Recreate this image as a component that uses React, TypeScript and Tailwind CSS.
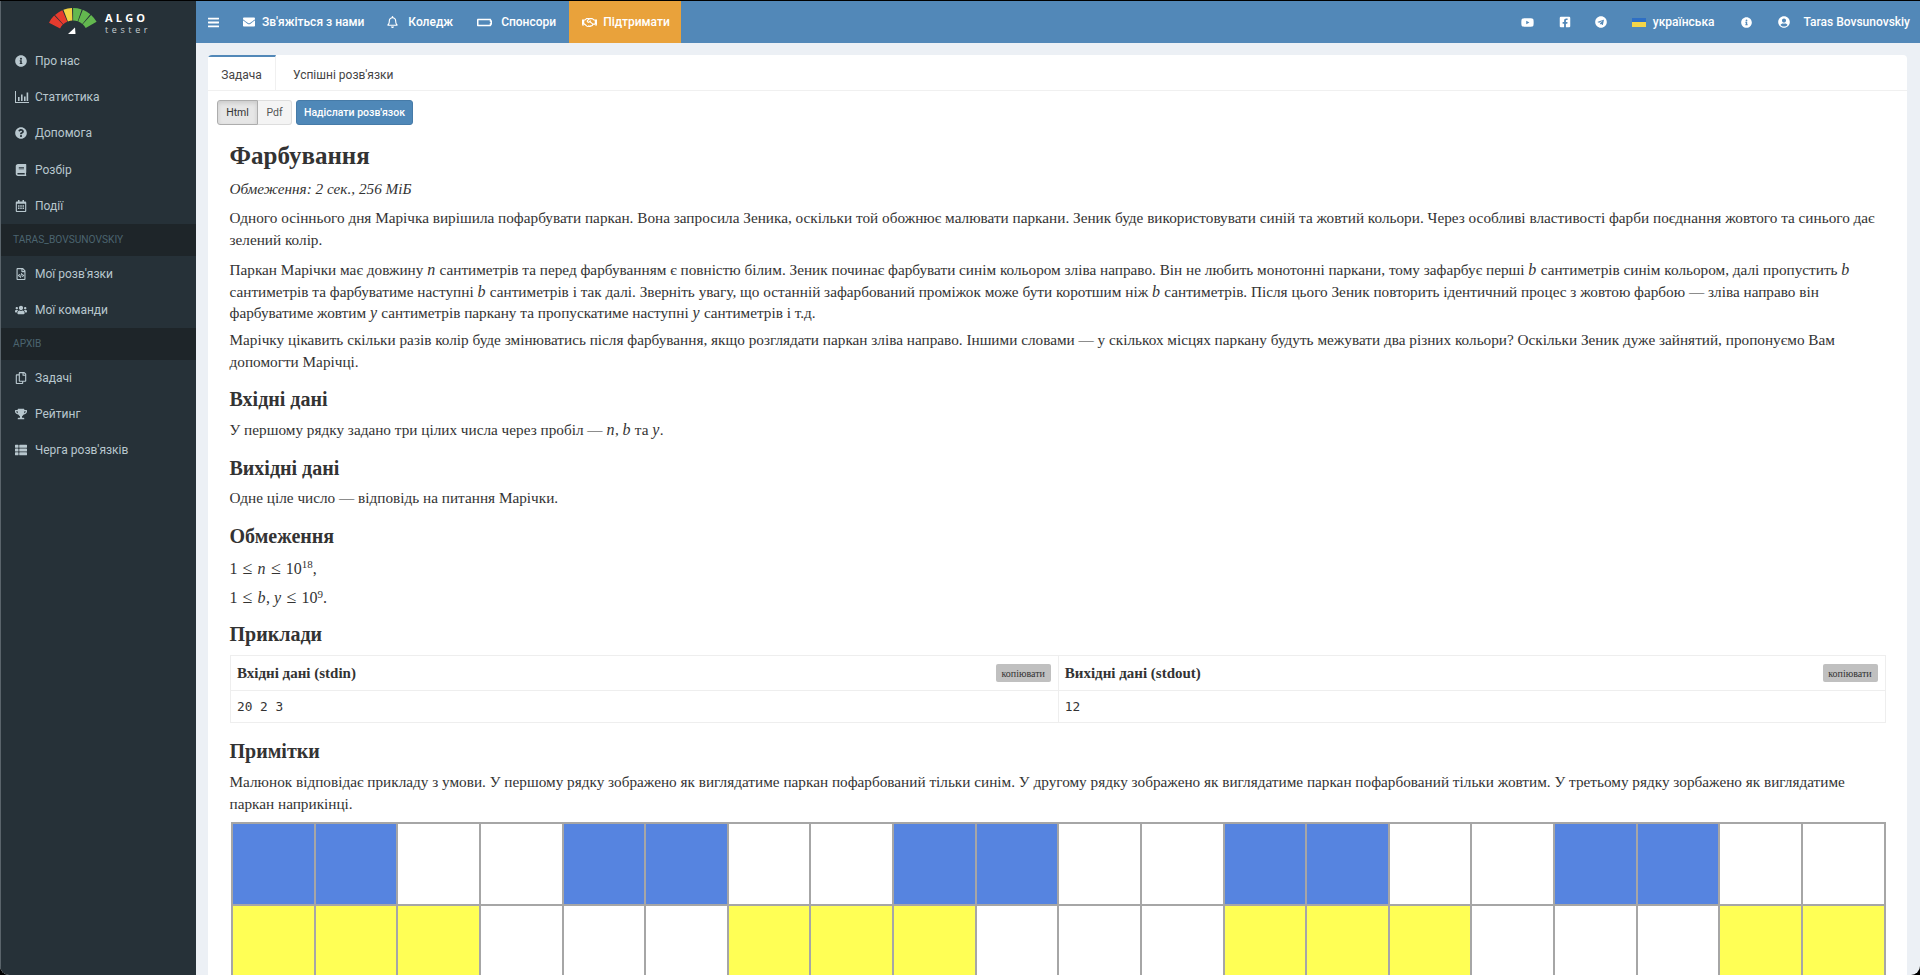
import type { ReactNode } from "react";
import {
  FaBars,
  FaBatteryEmpty,
  FaBook,
  FaEnvelope,
  FaFacebookSquare,
  FaInfoCircle,
  FaQuestionCircle,
  FaRegBell,
  FaRegCalendarAlt,
  FaRegCopy,
  FaRegFileCode,
  FaRegHandshake,
  FaTelegram,
  FaThList,
  FaTrophy,
  FaUserCircle,
  FaUsers,
  FaYoutube,
} from "react-icons/fa";

function arc(a0: number, a1: number) {
  const cx = 42;
  const cy = 34;
  const pt = (r: number, a: number) => {
    const t = (a * Math.PI) / 180;
    return `${(cx + r * Math.sin(t)).toFixed(1)} ${(cy - r * Math.cos(t)).toFixed(1)}`;
  };
  return `M${pt(14.5, a0)}L${pt(27, a0)}A27 27 0 0 1 ${pt(27, a1)}L${pt(14.5, a1)}A14.5 14.5 0 0 0 ${pt(14.5, a0)}Z`;
}

const gauge = [
  { a: -64, c: "#e63b2e" },
  { a: -43, c: "#e63b2e" },
  { a: -22, c: "#f3d344" },
  { a: -1, c: "#63b84f" },
  { a: 20, c: "#63b84f" },
  { a: 41, c: "#63b84f" },
];

function Logo() {
  return (
    <div className="h-[42px] flex items-center pl-[30px]">
      <svg width="84" height="42" viewBox="0 0 84 42" className="shrink-0">
        {gauge.map((s) => (
          <path key={s.a} d={arc(s.a + 1.2, s.a + 19.8)} fill={s.c} />
        ))}
        <path d="M37 33 L44 26.5 L44.5 33 Z" fill="#fff" />
      </svg>
      <div className="-ml-[10px] mt-[2px] font-['Open_Sans',sans-serif] text-white leading-none">
        <div className="text-[11px] font-bold tracking-[3.2px]">ALGO</div>
        <div className="text-[9px] tracking-[3.6px] text-[#c5ccd0] mt-[2px]">tester</div>
      </div>
    </div>
  );
}

function StatsIcon() {
  return (
    <svg width="14" height="12" viewBox="0 0 14 12" fill="currentColor">
      <path d="M0 0h1v11h13v1H0z" />
      <path d="M3 6h1.6v4H3zM6 3.5h1.6V10H6zM9 5.5h1.6V10H9zM11.6 1.5h1.6V10h-1.6z" />
    </svg>
  );
}

function SideItem({ icon, label }: { icon: ReactNode; label: string }) {
  return (
    <div className="h-[36.2px] flex items-center pl-[14px] text-[12px] text-[#b8c7ce]">
      <span className="w-[20px] text-[12px] flex justify-start">{icon}</span>
      {label}
    </div>
  );
}

function SideHeader({ label }: { label: string }) {
  return (
    <div className="h-[31.6px] flex items-center pl-[12px] bg-[#1e2529] text-[10.2px] text-[#4b646f]">{label}</div>
  );
}

function NavLink({ icon, label, className = "" }: { icon: ReactNode; label: string; className?: string }) {
  return (
    <div className={`h-full flex items-center text-[12px] font-medium text-white ${className}`}>
      {icon}
      {label}
    </div>
  );
}

function Sidebar() {
  return (
    <aside className="w-[196px] shrink-0 bg-[#263138] border-l border-[#5a646b] font-['Roboto',sans-serif]">
      <Logo />
      <SideItem icon={<FaInfoCircle />} label="Про нас" />
      <SideItem icon={<StatsIcon />} label="Статистика" />
      <SideItem icon={<FaQuestionCircle />} label="Допомога" />
      <SideItem icon={<FaBook />} label="Розбір" />
      <SideItem icon={<FaRegCalendarAlt />} label="Події" />
      <SideHeader label="TARAS_BOVSUNOVSKIY" />
      <SideItem icon={<FaRegFileCode />} label="Мої розв'язки" />
      <SideItem icon={<FaUsers />} label="Мої команди" />
      <SideHeader label="АРХІВ" />
      <SideItem icon={<FaRegCopy />} label="Задачі" />
      <SideItem icon={<FaTrophy />} label="Рейтинг" />
      <SideItem icon={<FaThList />} label="Черга розв'язків" />
    </aside>
  );
}

function Topbar() {
  return (
    <header className="h-[42px] shrink-0 bg-[#5288b8] flex items-center font-['Roboto',sans-serif] text-white">
      <FaBars className="ml-[12px] w-[11px] h-[13px]" />
      <NavLink className="ml-[24px]" icon={<FaEnvelope className="w-[12px] h-[12px] mr-[7px]" />} label="Зв'яжіться з нами" />
      <NavLink className="ml-[23px]" icon={<FaRegBell className="w-[11px] h-[12px] mr-[10px]" />} label="Коледж" />
      <NavLink className="ml-[24px]" icon={<FaBatteryEmpty className="w-[15px] h-[13px] mr-[9px]" />} label="Спонсори" />
      <NavLink
        className="ml-[13px] w-[112px] bg-[#e9a23b] pl-[13px]"
        icon={<FaRegHandshake className="w-[15px] h-[13px] mr-[6px]" />}
        label="Підтримати"
      />
      <div className="ml-auto flex items-center pr-[10px] text-[12px] font-medium">
        <FaYoutube className="w-[13px] h-[13px] mr-[25px]" />
        <FaFacebookSquare className="w-[12px] h-[12px] mr-[24px]" />
        <FaTelegram className="w-[12px] h-[12px] mr-[25px]" />
        <span className="w-[14px] h-[9px] mr-[7px] flex flex-col">
          <span className="h-1/2 bg-[#2f6fc4]" />
          <span className="h-1/2 bg-[#f5d547]" />
        </span>
        <span>українська</span>
        <FaInfoCircle className="ml-[26px] w-[11px] h-[11px]" />
        <FaUserCircle className="ml-[26px] w-[12px] h-[12px]" />
        <span className="ml-[14px]">Taras Bovsunovskiy</span>
      </div>
    </header>
  );
}

function M({ children }: { children: ReactNode }) {
  return <i className="text-[16px] leading-none tracking-[0.5px]">{children}</i>;
}

function Rel() {
  return <span className="mx-[5px] text-[18px] leading-none">≤</span>;
}

function Sup({ children }: { children: ReactNode }) {
  return <sup className="text-[11px] leading-none">{children}</sup>;
}

function H2({ children, className = "" }: { children: ReactNode; className?: string }) {
  return <h2 className={`text-[20px] leading-[22px] font-bold ${className}`}>{children}</h2>;
}

function CopyBtn() {
  return (
    <span className="w-[55px] h-[18px] flex items-center justify-center rounded-[2px] bg-[#c0c0c0] text-[10px] font-normal text-[#333]">
      копіювати
    </span>
  );
}

function Example() {
  return (
    <div className="mt-[10px] ml-[0.5px] grid grid-cols-2 border border-[#eee] text-[15px]">
      <div className="h-[35px] flex items-center justify-between pl-[6px] pr-[7px] font-bold border-b border-[#eee]">
        Вхідні дані (stdin) <CopyBtn />
      </div>
      <div className="h-[35px] flex items-center justify-between pl-[6px] pr-[7px] font-bold border-b border-l border-[#eee]">
        Вихідні дані (stdout) <CopyBtn />
      </div>
      <div className="h-[31px] flex items-center px-[6px] font-['DejaVu_Sans_Mono',monospace] text-[12.8px]">20 2 3</div>
      <div className="h-[31px] flex items-center px-[6px] border-l border-[#eee] font-['DejaVu_Sans_Mono',monospace] text-[12.8px]">12</div>
    </div>
  );
}

const rows = [
  { on: [0, 1, 4, 5, 8, 9, 12, 13, 16, 17], color: "bg-[#5684e0]" },
  { on: [0, 1, 2, 6, 7, 8, 12, 13, 14, 18, 19], color: "bg-[#ffff55]" },
];

function Fence() {
  return (
    <div className="mt-[7.6px] ml-[1.5px] grid grid-cols-[repeat(20,1fr)] gap-[2px] p-[2px] pb-0 bg-[#a6a6a6]">
      {rows.map((row) =>
        Array.from({ length: 20 }, (_, i) => (
          <div key={`${row.color}-${i}`} className={`h-[80.5px] ${row.on.includes(i) ? row.color : "bg-white"}`} />
        ))
      )}
    </div>
  );
}

function Statement() {
  return (
    <div className="px-[21.5px] pt-[17px] font-['Liberation_Serif',serif] text-[15.25px] leading-[21.4px] text-[#333]">
      <h1 className="text-[25px] leading-[28px] font-bold">Фарбування</h1>
      <p className="mt-[8px] italic">Обмеження: 2 сек., 256 МіБ</p>
      <p className="mt-[8px]">
        Одного осіннього дня Марічка вирішила пофарбувати паркан. Вона запросила Зеника, оскільки той обожнює малювати
        паркани. Зеник буде використовувати синій та жовтий кольори. Через особливі властивості фарби поєднання жовтого та
        синього дає зелений колір.
      </p>
      <p className="mt-[9px]">
        Паркан Марічки має довжину <M>n</M> сантиметрів та перед фарбуванням є повністю білим. Зеник починає фарбувати
        синім кольором зліва направо. Він не любить монотонні паркани, тому зафарбує перші <M>b</M> сантиметрів синім
        кольором, далі пропустить <M>b</M> сантиметрів та фарбуватиме наступні <M>b</M> сантиметрів і так далі. Зверніть
        увагу, що останній зафарбований проміжок може бути коротшим ніж <M>b</M> сантиметрів. Після цього Зеник повторить
        ідентичний процес з жовтою фарбою — зліва направо він фарбуватиме жовтим <M>y</M> сантиметрів паркану та
        пропускатиме наступні <M>y</M> сантиметрів і т.д.
      </p>
      <p className="mt-[6px]">
        Марічку цікавить скільки разів колір буде змінюватись після фарбування, якщо розглядати паркан зліва направо.
        Іншими словами — у скількох місцях паркану будуть межувати два різних кольори? Оскільки Зеник дуже зайнятий,
        пропонуємо Вам допомогти Марічці.
      </p>
      <H2 className="mt-[16px]">Вхідні дані</H2>
      <p className="mt-[9px]">
        У першому рядку задано три цілих числа через пробіл — <M>n</M>, <M>b</M> та <M>y</M>.
      </p>
      <H2 className="mt-[16px]">Вихідні дані</H2>
      <p className="mt-[8px]">Одне ціле число — відповідь на питання Марічки.</p>
      <H2 className="mt-[17px]">Обмеження</H2>
      <p className="mt-[10.6px] text-[16px] h-[21.4px]">
        1<Rel />
        <M>n</M>
        <Rel />
        10<Sup>18</Sup>,
      </p>
      <p className="mt-[8px] text-[16px] h-[21.4px]">
        1<Rel />
        <M>b</M>, <M>y</M>
        <Rel />
        10<Sup>9</Sup>.
      </p>
      <H2 className="mt-[15px]">Приклади</H2>
      <Example />
      <H2 className="mt-[17px]">Примітки</H2>
      <p className="mt-[9px]">
        Малюнок відповідає прикладу з умови. У першому рядку зображено як виглядатиме паркан пофарбований тільки синім. У
        другому рядку зображено як виглядатиме паркан пофарбований тільки жовтим. У третьому рядку зорбажено як виглядатиме
        паркан наприкінці.
      </p>
      <Fence />
    </div>
  );
}

function Card() {
  return (
    <div className="mt-[12px] ml-[12px] mr-[13px] flex-1 bg-white rounded-t-[4px] overflow-hidden">
      <div className="h-[36px] flex border-b border-[#f0f0f0] font-['Roboto',sans-serif] text-[12px] text-[#444]">
        <div className="w-[68px] pt-[2px] border-t-2 border-[#5288b8] border-r border-r-[#f0f0f0] flex items-center justify-center">
          Задача
        </div>
        <div className="ml-[17px] pt-[4px] flex items-center">Успішні розв'язки</div>
      </div>
      <div className="mt-[9px] ml-[9px] flex font-['Roboto',sans-serif] text-[10.5px]">
        <span className="w-[41px] h-[25px] flex items-center justify-center rounded-l-[3px] border border-[#adadad] bg-[#e6e6e6] text-[#333] shadow-[inset_0_2px_4px_rgba(0,0,0,0.125)]">
          Html
        </span>
        <span className="w-[34px] h-[25px] flex items-center justify-center rounded-r-[3px] border border-l-0 border-[#ddd] bg-[#f4f4f4] text-[#555]">
          Pdf
        </span>
        <span className="ml-[4px] w-[117px] h-[25px] flex items-center justify-center rounded-[3px] bg-[#4f88b8] border border-[#467ba8] font-medium text-white">
          Надіслати розв'язок
        </span>
      </div>
      <Statement />
    </div>
  );
}

export default function App() {
  return (
    <div className="h-[975px] w-[1920px] bg-black overflow-hidden">
      <div className="h-full flex overflow-hidden rounded-b-[9px] bg-[#ecf0f5] border-t border-black">
        <Sidebar />
        <main className="flex-1 min-w-0 flex flex-col">
          <Topbar />
          <Card />
        </main>
      </div>
    </div>
  );
}
